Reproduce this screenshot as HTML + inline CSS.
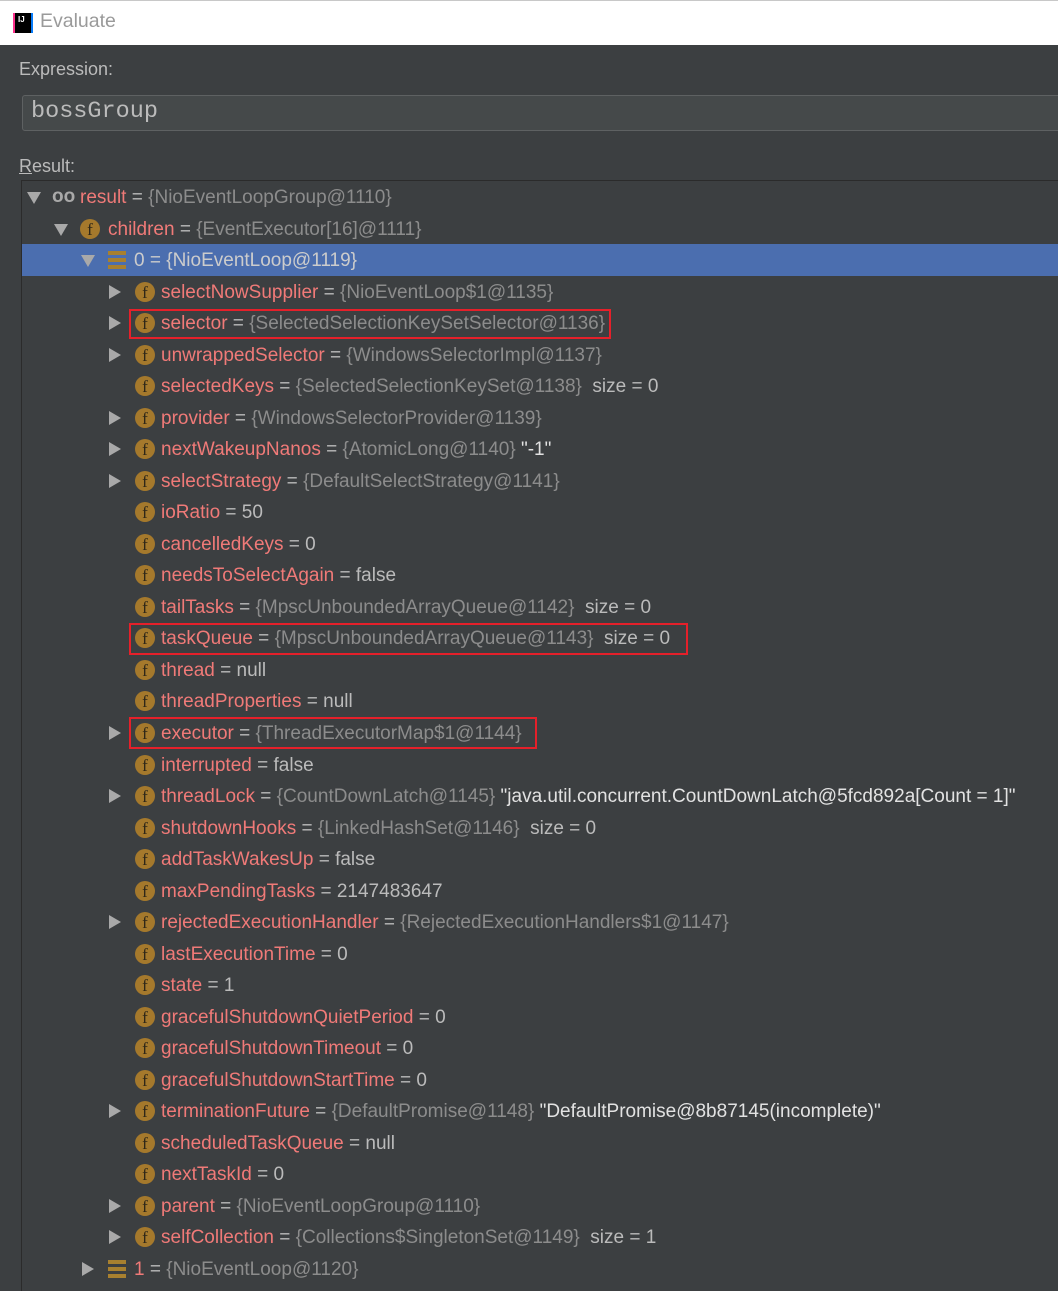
<!DOCTYPE html>
<html><head><meta charset="utf-8"><style>
body{margin:0;width:1058px;height:1284px;background:#3c3f41;font-family:"Segoe UI","Liberation Sans",sans-serif;overflow:hidden;position:relative}
.title{position:absolute;left:0;top:0;width:1058px;height:44px;background:#fff;border-top:1px solid #c8c8c8}
.title span{position:absolute;left:40px;top:9px;font-size:19.5px;color:#9a9a9a}
.logo{position:absolute;left:13px;top:12px;width:20px;height:20px;background:#000;border-left:2px solid #fc318c;border-right:2px solid #087cfa;box-sizing:border-box;color:#fff;font:bold 8px "Liberation Sans";padding:2px 0 0 3px}
.lbl{position:absolute;color:#bbbbbb;font-size:18px}
.expr{position:absolute;left:22px;top:95px;width:1050px;height:36px;background:#45494a;border:1px solid #5e6162;border-radius:3px;box-sizing:border-box;font:23.5px "Liberation Mono",monospace;color:#bbbbbb;padding:2px 0 0 8px}
.tree{position:absolute;left:21px;top:180px;width:1040px;height:1110px;border-left:1px solid #2b2b2b;border-top:1px solid #2b2b2b;background:#3c3f41}
.sel{position:absolute;left:22px;top:244px;width:1036px;height:32px;background:#4b6eaf}
.r{position:absolute;height:30px;line-height:30px;left:161px;font-size:19px;color:#bbbbbb;white-space:nowrap;margin-top:1px}
.n{color:#f07a78}.v{color:#8c8c8c}.s{color:#e2e2e2}
.a{position:absolute;width:0;height:0;border-top:7px solid transparent;border-bottom:7px solid transparent;border-left:12px solid #a9a9a9}
.d{position:absolute;width:0;height:0;border-left:7px solid transparent;border-right:7px solid transparent;border-top:12px solid #a9a9a9}
.f{position:absolute;width:20px;height:20px;border-radius:50%;background:#a5792c;color:#2e2718;font:17px "Liberation Serif",serif;text-align:center;line-height:21px}
.eq{position:absolute;width:18px;height:18px;background:repeating-linear-gradient(#a8802f 0 4px,transparent 4px 7px)}
.box{position:absolute;border:2px solid #e5202a;box-sizing:border-box}
</style></head><body>
<div class="title"><div class="logo">IJ</div><span>Evaluate</span></div>
<div class="lbl" style="left:19px;top:59px">Expression:</div>
<div class="expr">bossGroup</div>
<div class="lbl" style="left:19px;top:156px"><u>R</u>esult:</div>
<div class="tree"></div>
<div class="sel"></div>

<div class="d" style="left:27px;top:192px"></div>
<div style="position:absolute;left:52px;top:186px;color:#a9a9a9;font:bold 19px 'Liberation Sans'">oo</div>
<div class="r" style="left:80px;top:182px"><span class="n">result</span> = <span class="v">{NioEventLoopGroup@1110}</span></div>

<div class="d" style="left:54px;top:224px"></div>
<div class="f" style="left:80px;top:219px">f</div>
<div class="r" style="left:108px;top:214px"><span class="n">children</span> = <span class="v">{EventExecutor[16]@1111}</span></div>

<div class="d" style="left:81px;top:255px"></div>
<div class="eq" style="left:108px;top:251px"></div>
<div class="r" style="left:134px;top:245px;color:#ccc">0 = {NioEventLoop@1119}</div>

<div class="a" style="left:109px;top:285px"></div><div class="f" style="left:135px;top:282px">f</div>
<div class="r" style="top:277px"><span class="n">selectNowSupplier</span> = <span class="v">{NioEventLoop$1@1135}</span></div>
<div class="a" style="left:109px;top:316px"></div><div class="f" style="left:135px;top:313px">f</div>
<div class="r" style="top:308px"><span class="n">selector</span> = <span class="v">{SelectedSelectionKeySetSelector@1136}</span></div>
<div class="a" style="left:109px;top:348px"></div><div class="f" style="left:135px;top:345px">f</div>
<div class="r" style="top:340px"><span class="n">unwrappedSelector</span> = <span class="v">{WindowsSelectorImpl@1137}</span></div>
<div class="f" style="left:135px;top:376px">f</div>
<div class="r" style="top:371px"><span class="n">selectedKeys</span> = <span class="v">{SelectedSelectionKeySet@1138}</span>&nbsp; size = 0</div>
<div class="a" style="left:109px;top:411px"></div><div class="f" style="left:135px;top:408px">f</div>
<div class="r" style="top:403px"><span class="n">provider</span> = <span class="v">{WindowsSelectorProvider@1139}</span></div>
<div class="a" style="left:109px;top:442px"></div><div class="f" style="left:135px;top:439px">f</div>
<div class="r" style="top:434px"><span class="n">nextWakeupNanos</span> = <span class="v">{AtomicLong@1140}</span> <span class="s">"-1"</span></div>
<div class="a" style="left:109px;top:474px"></div><div class="f" style="left:135px;top:471px">f</div>
<div class="r" style="top:466px"><span class="n">selectStrategy</span> = <span class="v">{DefaultSelectStrategy@1141}</span></div>
<div class="f" style="left:135px;top:502px">f</div>
<div class="r" style="top:497px"><span class="n">ioRatio</span> = 50</div>
<div class="f" style="left:135px;top:534px">f</div>
<div class="r" style="top:529px"><span class="n">cancelledKeys</span> = 0</div>
<div class="f" style="left:135px;top:565px">f</div>
<div class="r" style="top:560px"><span class="n">needsToSelectAgain</span> = false</div>
<div class="f" style="left:135px;top:597px">f</div>
<div class="r" style="top:592px"><span class="n">tailTasks</span> = <span class="v">{MpscUnboundedArrayQueue@1142}</span>&nbsp; size = 0</div>
<div class="f" style="left:135px;top:628px">f</div>
<div class="r" style="top:623px"><span class="n">taskQueue</span> = <span class="v">{MpscUnboundedArrayQueue@1143}</span>&nbsp; size = 0</div>
<div class="f" style="left:135px;top:660px">f</div>
<div class="r" style="top:655px"><span class="n">thread</span> = null</div>
<div class="f" style="left:135px;top:691px">f</div>
<div class="r" style="top:686px"><span class="n">threadProperties</span> = null</div>
<div class="a" style="left:109px;top:726px"></div><div class="f" style="left:135px;top:723px">f</div>
<div class="r" style="top:718px"><span class="n">executor</span> = <span class="v">{ThreadExecutorMap$1@1144}</span></div>
<div class="f" style="left:135px;top:755px">f</div>
<div class="r" style="top:750px"><span class="n">interrupted</span> = false</div>
<div class="a" style="left:109px;top:789px"></div><div class="f" style="left:135px;top:786px">f</div>
<div class="r" style="top:781px"><span class="n">threadLock</span> = <span class="v">{CountDownLatch@1145}</span> <span class="s">"java.util.concurrent.CountDownLatch@5fcd892a[Count = 1]"</span></div>
<div class="f" style="left:135px;top:818px">f</div>
<div class="r" style="top:813px"><span class="n">shutdownHooks</span> = <span class="v">{LinkedHashSet@1146}</span>&nbsp; size = 0</div>
<div class="f" style="left:135px;top:849px">f</div>
<div class="r" style="top:844px"><span class="n">addTaskWakesUp</span> = false</div>
<div class="f" style="left:135px;top:881px">f</div>
<div class="r" style="top:876px"><span class="n">maxPendingTasks</span> = 2147483647</div>
<div class="a" style="left:109px;top:915px"></div><div class="f" style="left:135px;top:912px">f</div>
<div class="r" style="top:907px"><span class="n">rejectedExecutionHandler</span> = <span class="v">{RejectedExecutionHandlers$1@1147}</span></div>
<div class="f" style="left:135px;top:944px">f</div>
<div class="r" style="top:939px"><span class="n">lastExecutionTime</span> = 0</div>
<div class="f" style="left:135px;top:975px">f</div>
<div class="r" style="top:970px"><span class="n">state</span> = 1</div>
<div class="f" style="left:135px;top:1007px">f</div>
<div class="r" style="top:1002px"><span class="n">gracefulShutdownQuietPeriod</span> = 0</div>
<div class="f" style="left:135px;top:1038px">f</div>
<div class="r" style="top:1033px"><span class="n">gracefulShutdownTimeout</span> = 0</div>
<div class="f" style="left:135px;top:1070px">f</div>
<div class="r" style="top:1065px"><span class="n">gracefulShutdownStartTime</span> = 0</div>
<div class="a" style="left:109px;top:1104px"></div><div class="f" style="left:135px;top:1101px">f</div>
<div class="r" style="top:1096px"><span class="n">terminationFuture</span> = <span class="v">{DefaultPromise@1148}</span> <span class="s">"DefaultPromise@8b87145(incomplete)"</span></div>
<div class="f" style="left:135px;top:1133px">f</div>
<div class="r" style="top:1128px"><span class="n">scheduledTaskQueue</span> = null</div>
<div class="f" style="left:135px;top:1164px">f</div>
<div class="r" style="top:1159px"><span class="n">nextTaskId</span> = 0</div>
<div class="a" style="left:109px;top:1199px"></div><div class="f" style="left:135px;top:1196px">f</div>
<div class="r" style="top:1191px"><span class="n">parent</span> = <span class="v">{NioEventLoopGroup@1110}</span></div>
<div class="a" style="left:109px;top:1230px"></div><div class="f" style="left:135px;top:1227px">f</div>
<div class="r" style="top:1222px"><span class="n">selfCollection</span> = <span class="v">{Collections$SingletonSet@1149}</span>&nbsp; size = 1</div>

<div class="a" style="left:82px;top:1262px"></div><div class="eq" style="left:108px;top:1260px"></div>
<div class="r" style="left:134px;top:1254px"><span class="n">1</span> = <span class="v">{NioEventLoop@1120}</span></div>

<div class="box" style="left:129px;top:309px;width:482px;height:30px"></div>
<div class="box" style="left:129px;top:623px;width:559px;height:32px"></div>
<div class="box" style="left:129px;top:717px;width:408px;height:32px"></div>
</body></html>
